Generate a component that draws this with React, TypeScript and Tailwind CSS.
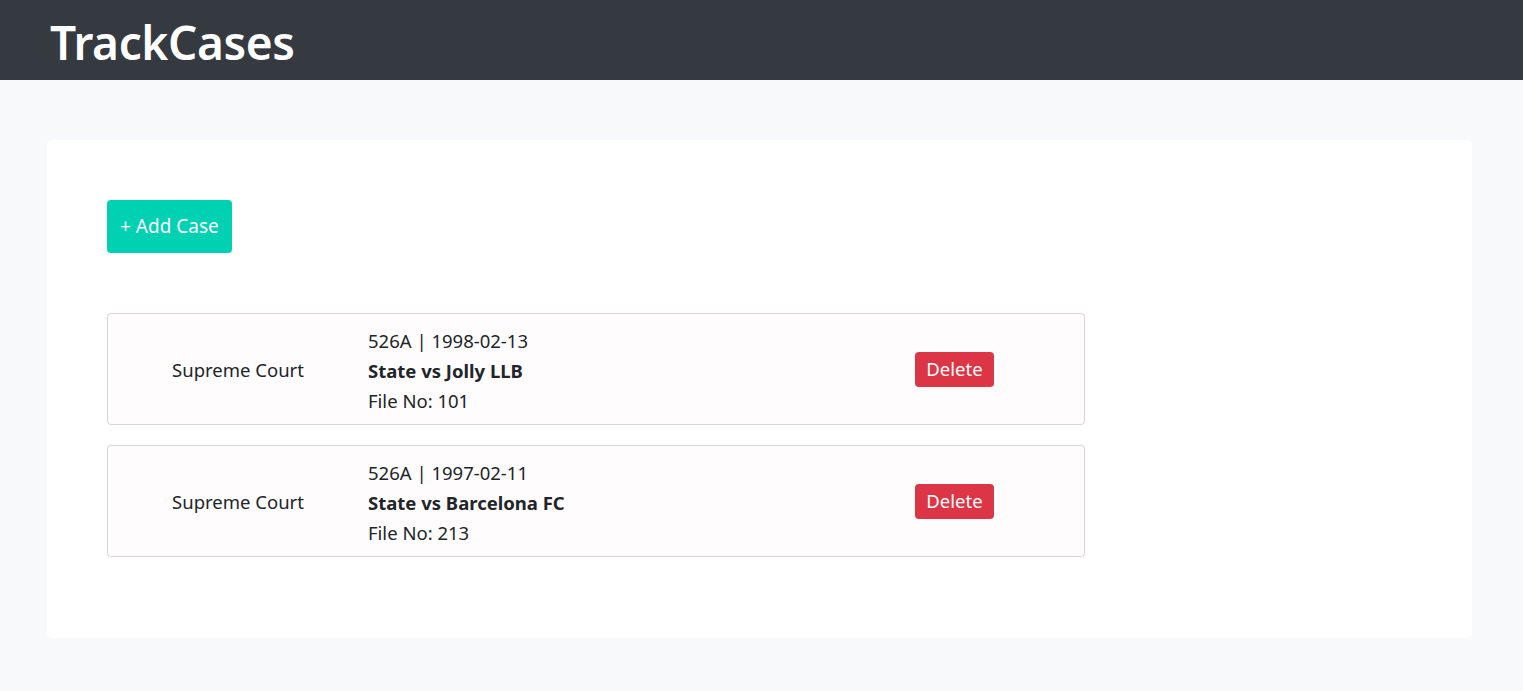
import React from 'react'

type CaseItem = {
  court: string;
  code: string;
  date: string;
  title: string;
  fileNo: string;
};

const cases: CaseItem[] = [
  { court: 'Supreme Court', code: '526A', date: '1998-02-13', title: 'State vs Jolly LLB', fileNo: '101' },
  { court: 'Supreme Court', code: '526A', date: '1997-02-11', title: 'State vs Barcelona FC', fileNo: '213' },
];

const CaseRow: React.FC<{ item: CaseItem }> = ({ item }) => {
  return (
    <div className="grid grid-cols-[260px_457px_1fr] items-center h-[112px] mb-5 bg-[#fffcfd] border border-[#d6d6d6] rounded-[4px] text-[#212529] text-[18.5px] leading-[30px]">
      <div className="text-center pt-[2px]">{item.court}</div>
      <div className="flex flex-col pt-[3px]">
        <span>{item.code} | {item.date}</span>
        <span className="font-bold">{item.title}</span>
        <span>File No: {item.fileNo}</span>
      </div>
      <div className="flex justify-center">
        <button className="h-[35px] px-[11px] bg-[#dc3545] text-white rounded-[4px] text-[18.5px] leading-none">
          Delete
        </button>
      </div>
    </div>
  );
};

export default function App() {
  return (
    <div className="min-h-[691px] bg-[#f8f9fa] font-['Noto_Sans',sans-serif]">
      {/* Header */}
      <div className="h-20 bg-[#343a40] flex items-center px-[50px] pt-[3px]">
        <h1 className="text-white text-[46px] font-semibold tracking-[-0.4px] leading-none">TrackCases</h1>
      </div>

      {/* Main card */}
      <div className="pt-[60px] pl-[47px] pr-[51px] pb-[54px]">
        <div className="bg-white rounded-[5px] px-[60px] pt-[60px] pb-[61px]">
          <button className="h-[53px] px-[13px] bg-[#00d1b2] text-white rounded-[4px] text-[19px]">
            + Add Case
          </button>
          <div className="mt-[60px] w-[978px]">
            {cases.map((c) => (
              <CaseRow key={c.fileNo} item={c} />
            ))}
          </div>
        </div>
      </div>
    </div>
  );
}
